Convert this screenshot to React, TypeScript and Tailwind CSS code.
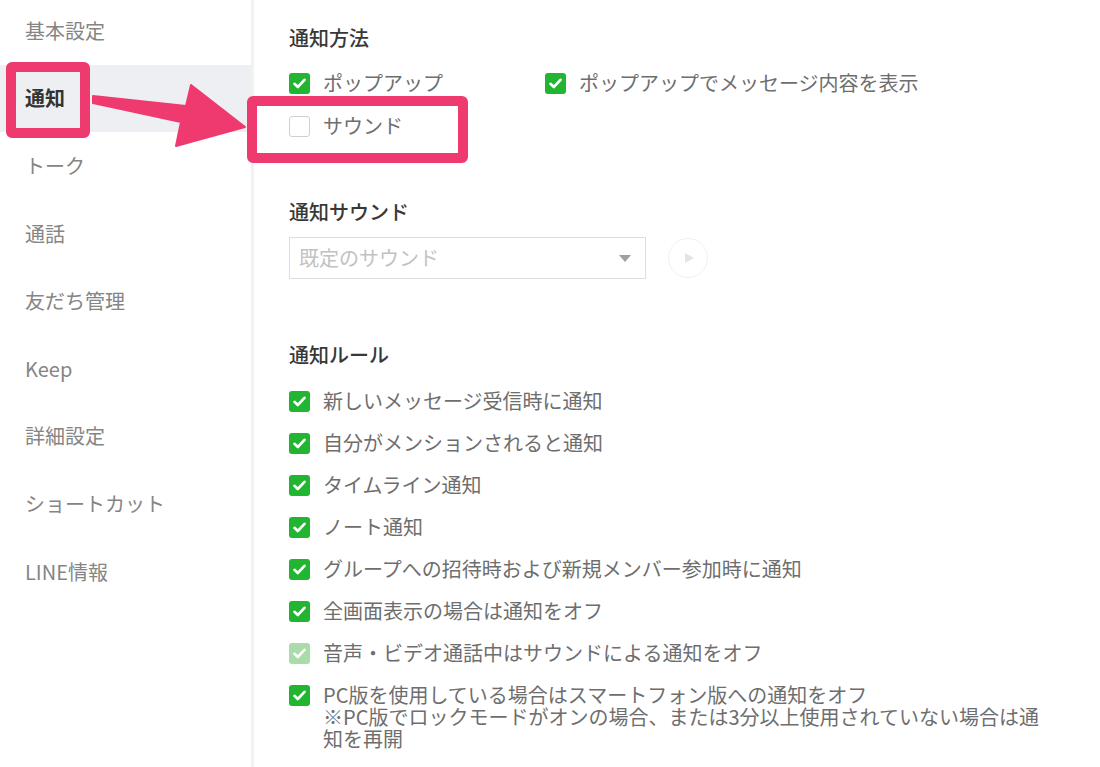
import React from "react"

const menu = ["基本設定", "通知", "トーク", "通話", "友だち管理", "Keep", "詳細設定", "ショートカット", "LINE情報"]

const rules: { label: React.ReactNode; faded?: boolean }[] = [
  { label: "新しいメッセージ受信時に通知" },
  { label: "自分がメンションされると通知" },
  { label: "タイムライン通知" },
  { label: "ノート通知" },
  { label: "グループへの招待時および新規メンバー参加時に通知" },
  { label: "全画面表示の場合は通知をオフ" },
  { label: "音声・ビデオ通話中はサウンドによる通知をオフ", faded: true },
  {
    label: (
      <>
        PC版を使用している場合はスマートフォン版への通知をオフ
        <br />
        ※PC版でロックモードがオンの場合、または3分以上使用されていない場合は通知を再開
      </>
    ),
  },
]

export default function App() {
  return (
    <div
      className="relative flex h-[767px] w-[1100px] overflow-hidden bg-white text-[20px]"
      style={{ fontFamily: '"Noto Sans CJK JP", "Noto Sans", sans-serif' }}
    >
      {/* Sidebar */}
      <aside className="w-[254px] shrink-0 border-r-[3px] border-[#f2f2f3]">
        <ul className="-mt-[3px] flex flex-col">
          {menu.map((item) => (
            <li
              key={item}
              className={
                item === "通知"
                  ? "flex h-[67.6px] items-center bg-[#edeff3] pl-[25px] font-bold text-[#333]"
                  : "flex h-[67.6px] items-center pl-[25px] text-[#858585]"
              }
            >
              {item}
            </li>
          ))}
        </ul>
      </aside>

      {/* Content */}
      <main className="flex-1 pl-[35px] pt-[26px]">
        <h2 className="leading-[24px] font-medium text-[#383838]">通知方法</h2>
        <div className="mt-[22px] flex">
          <div className="w-[256px]">
            <CheckRow checked label="ポップアップ" />
          </div>
          <CheckRow checked label="ポップアップでメッセージ内容を表示" />
        </div>
        <div className="mt-[21px]">
          <CheckRow label="サウンド" />
        </div>

        <h2 className="mt-[63px] leading-[24px] font-medium text-[#383838]">通知サウンド</h2>
        <div className="mt-[13px] flex items-center gap-[22px]">
          <div className="flex h-[42px] w-[357px] items-center justify-between border border-[#dedede] pl-[9px] pr-[14px] text-[#c2c2c2]">
            <span>既定のサウンド</span>
            <svg width="12" height="7" viewBox="0 0 12 7">
              <path d="M0 0h12L6 7z" fill="#a0a0a0" />
            </svg>
          </div>
          <div className="flex h-[40px] w-[40px] items-center justify-center rounded-full border border-[#f1f1f1]">
            <svg width="9" height="10" viewBox="0 0 9 10" className="ml-[2px]">
              <path d="M0 0l9 5-9 5z" fill="#e4e4e4" />
            </svg>
          </div>
        </div>

        <h2 className="mt-[64px] leading-[24px] font-medium text-[#383838]">通知ルール</h2>
        <div className="mt-[23px] flex flex-col gap-[20px]">
          {rules.map((r, i) => (
            <CheckRow key={i} checked faded={r.faded} label={r.label} />
          ))}
        </div>
      </main>

      {/* Annotation overlay */}
      <div className="pointer-events-none absolute left-[6px] top-[62px] h-[76px] w-[84px] rounded-[6px] border-[10px] border-[#ef3a6f]" />
      <div className="pointer-events-none absolute left-[247px] top-[96px] h-[67px] w-[221px] rounded-[6px] border-[10px] border-[#ef3a6f]" />
      <svg className="pointer-events-none absolute left-0 top-0" width="1100" height="767">
        <polygon
          points="93,96 186,106 191,85 245,127 176,146 181,122 93,103"
          fill="#ef3a6f"
          stroke="#ef3a6f"
          strokeWidth="2"
          strokeLinejoin="round"
        />
      </svg>
    </div>
  )
}

function CheckRow({
  checked,
  faded,
  label,
}: {
  checked?: boolean
  faded?: boolean
  label: React.ReactNode
}) {
  return (
    <div className="flex items-start gap-[13px]">
      <span
        className={
          checked
            ? faded
              ? "mt-[1px] flex h-[21px] w-[21px] shrink-0 items-center justify-center rounded-[3px] bg-[#a9dca9]"
              : "mt-[1px] flex h-[21px] w-[21px] shrink-0 items-center justify-center rounded-[3px] bg-[#22b531]"
            : "mt-[1px] h-[21px] w-[21px] shrink-0 rounded-[3px] border border-[#cfcfcf] bg-white"
        }
      >
        {checked && (
          <svg width="13" height="11" viewBox="0 0 13 11">
            <path d="M1.5 5.8l3.3 3.2L11.5 1.8" fill="none" stroke="#fff" strokeWidth="2.6" strokeLinecap="round" strokeLinejoin="round" />
          </svg>
        )}
      </span>
      <span className="max-w-[730px] leading-[22px] text-[#6e6e6e]">{label}</span>
    </div>
  )
}
